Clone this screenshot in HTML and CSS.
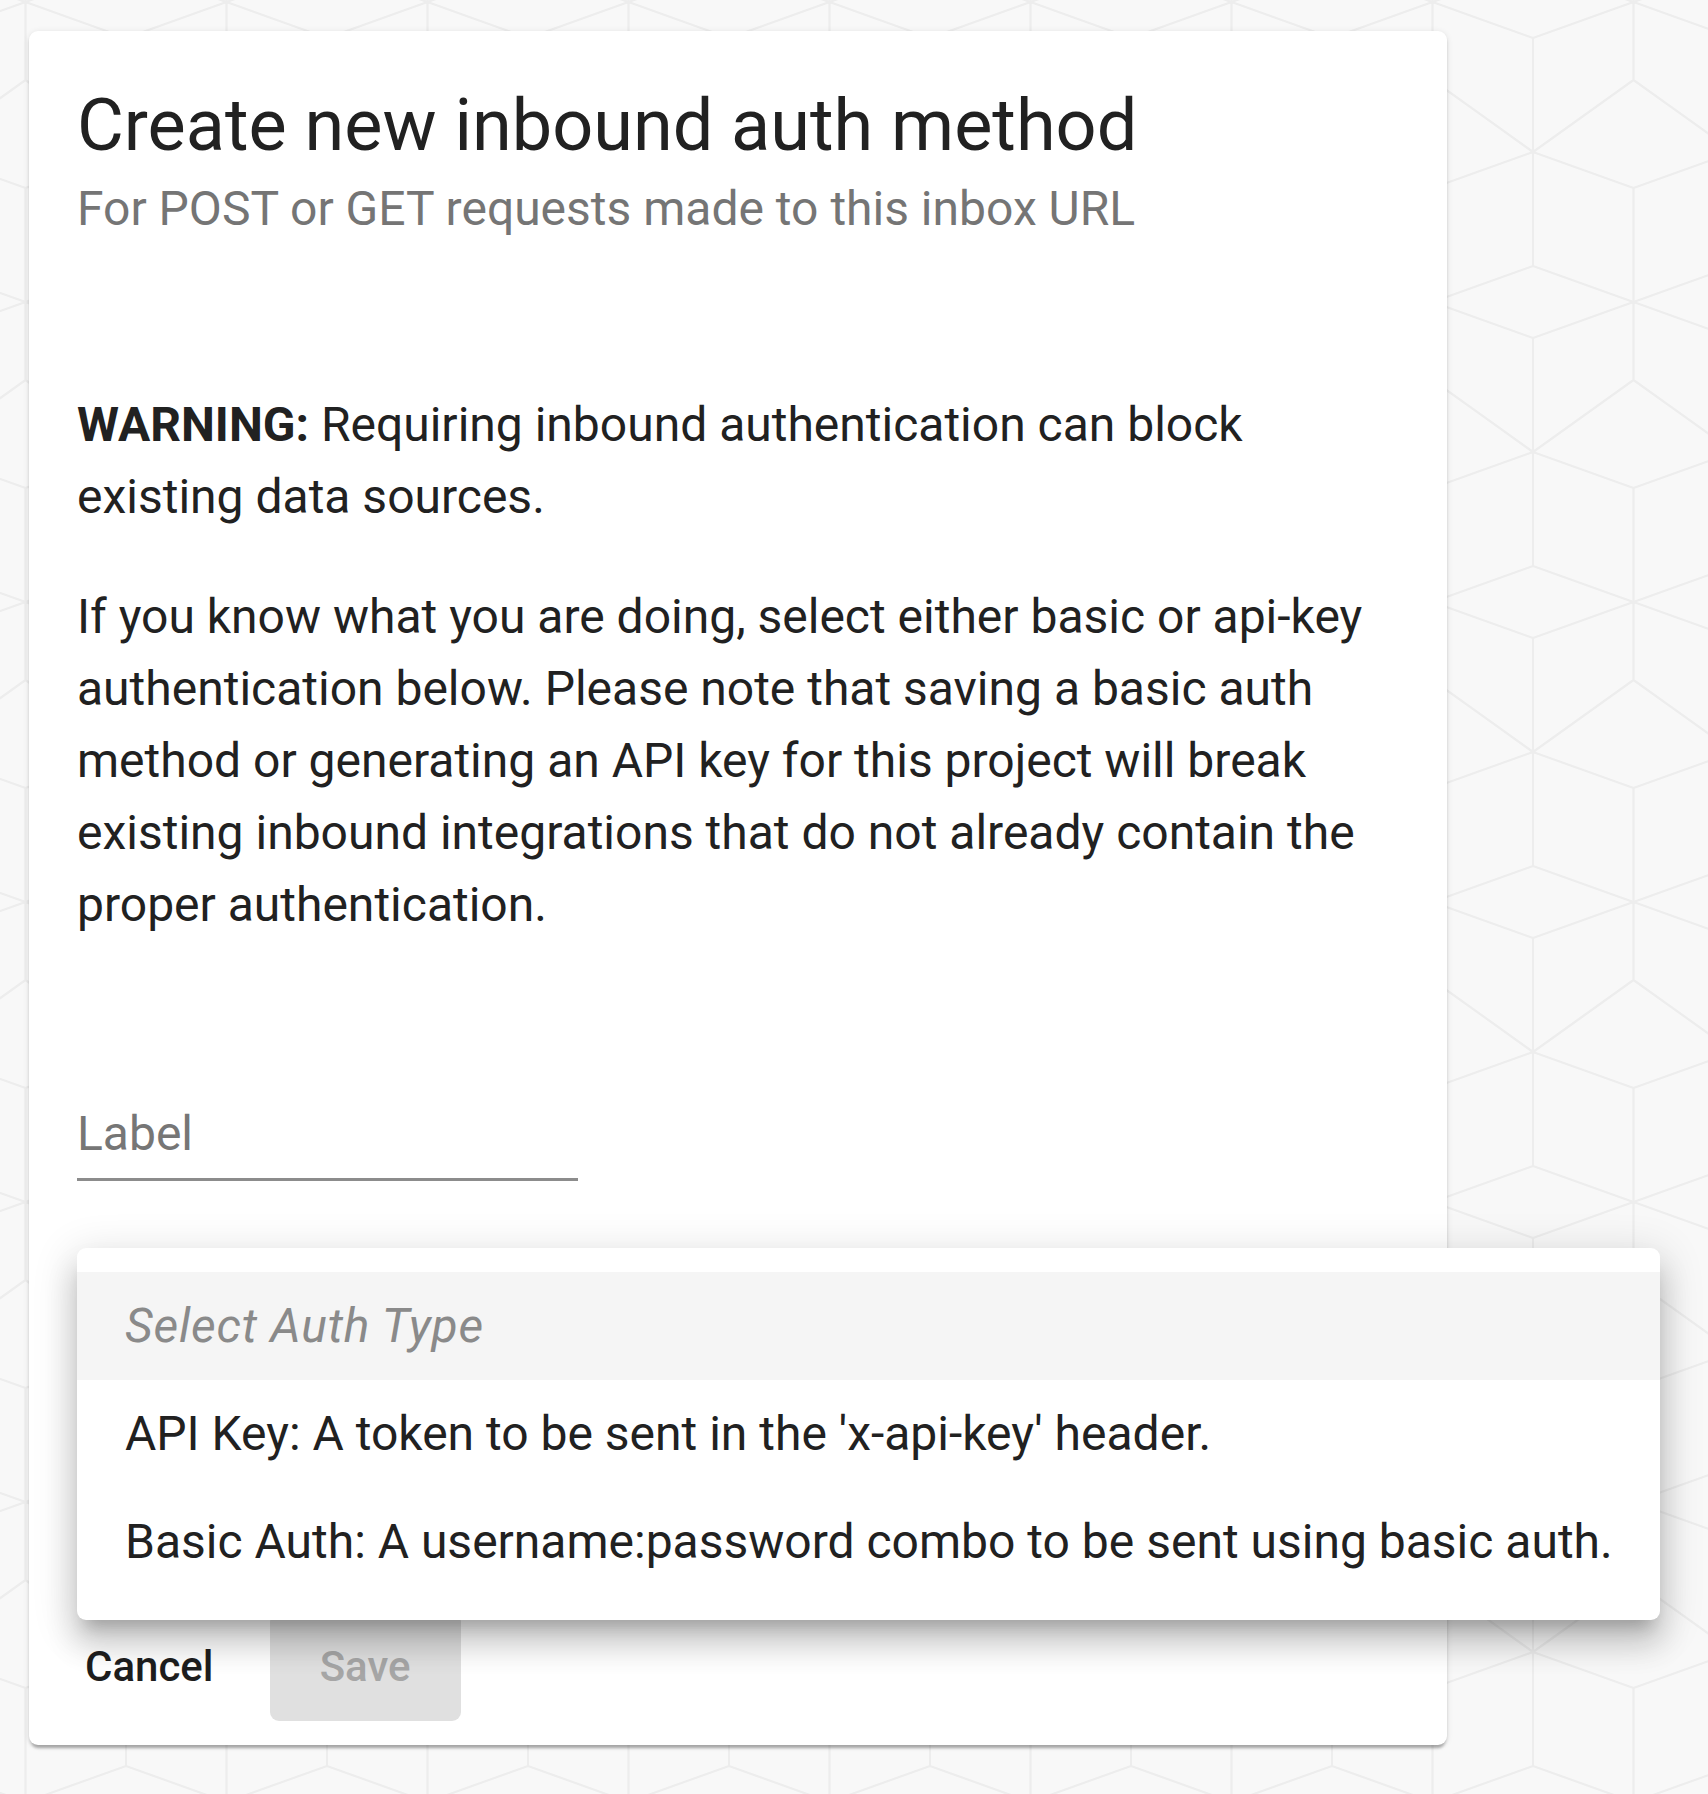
FILE: index.html
```html
<!DOCTYPE html>
<html lang="en">
<head>
<meta charset="utf-8">
<title>Create new inbound auth method</title>
<link rel="stylesheet" href="styles.css">
</head>
<body>
<div class="page">
  <div class="card">
    <h1 class="title">Create new inbound auth method</h1>
    <p class="subtitle">For POST or GET requests made to this inbox URL</p>

    <div class="content">
      <p class="para"><strong>WARNING:</strong> Requiring inbound authentication can block existing data sources.</p>
      <p class="para para-gap">If you know what you are doing, select either basic or api-key authentication below. Please note that saving a basic auth method or generating an API key for this project will break existing inbound integrations that do not already contain the proper authentication.</p>

      <div class="field">
        <span class="field-label">Label</span>
      </div>

      <div class="select-field"></div>
    </div>

    <div class="actions">
      <button class="btn btn-cancel" type="button">Cancel</button>
      <button class="btn btn-save" type="button" disabled>Save</button>
    </div>

    <ul class="menu">
      <li class="menu-item menu-placeholder">Select Auth Type</li>
      <li class="menu-item">API Key: A token to be sent in the 'x-api-key' header.</li>
      <li class="menu-item">Basic Auth: A username:password combo to be sent using basic auth.</li>
    </ul>
  </div>
</div>
</body>
</html>
```

FILE: styles.css
```css
html {
  background-color: #f8f8f8;
  background-image: url("data:image/svg+xml,%3Csvg xmlns='http://www.w3.org/2000/svg' width='201' height='300'%3E%3Cpath fill='none' stroke='%23ededed' stroke-width='2.2' d='M50 36 L150.5 0 M50 36 L-50.5 0 M251 36 L150.5 0 M50 150 L150.5 78 M50 150 L150.5 186 M50 150 L-50.5 78 M50 150 L-50.5 186 M251 150 L150.5 78 M251 150 L150.5 186 M50 264 L150.5 300 M50 264 L-50.5 300 M251 264 L150.5 300 M50 -36 L150.5 0 M251 -36 L150.5 0 M50 336 L150.5 300 M50 36 V264 M150.5 186 V300 M150.5 0 V78'/%3E%3C/svg%3E");
  background-size: 201px 300px;
  background-position: 76px 2px;
  min-height: 100%;
}

body {
  margin: 0;
  font-family: Roboto, "Noto Sans", "Liberation Sans", sans-serif;
  color: #212121;
}

.page {
  padding: 31px 0 0 29px;
  min-height: 1794px;
  box-sizing: border-box;
}

.card {
  position: relative;
  width: 1418px;
  box-sizing: border-box;
  padding: 48px 48px 24px 48px;
  background: #ffffff;
  border-radius: 9px;
  box-shadow: 0 6px 3px -3px rgba(0, 0, 0, 0.2), 0 3px 3px 0 rgba(0, 0, 0, 0.12), 0 1px 6px 0 rgba(0, 0, 0, 0.1);
}

.title {
  margin: 4px 0 0 0;
  font-size: 72px;
  line-height: 86px;
  font-weight: 400;
  color: #212121;
}

.subtitle {
  margin: 4px 0 0 0;
  font-size: 48px;
  line-height: 72px;
  color: #757575;
}

.content {
  margin-top: 144px;
}

.para {
  margin: 0;
  font-size: 48px;
  line-height: 72px;
  color: #212121;
}

.para strong {
  font-weight: 700;
}

.para-gap {
  margin-top: 48px;
}

.field {
  margin-top: 157px;
  width: 501px;
  padding-bottom: 8px;
  border-bottom: 3px solid #8c8c8c;
}

.field-label {
  display: block;
  font-size: 48px;
  line-height: 72px;
  color: #767676;
}

.select-field {
  height: 432px;
}

.actions {
  display: flex;
  align-items: center;
  height: 108px;
}

.btn {
  font-family: Roboto, "Noto Sans", "Liberation Sans", sans-serif;
  font-size: 42px;
  font-weight: 500;
  line-height: 108px;
  height: 108px;
  border: none;
  background: transparent;
  border-radius: 9px;
  cursor: pointer;
}

.btn-cancel {
  padding: 0 29px;
  margin-left: -21px;
  color: #1e1e1e;
}

.btn-save {
  margin-left: 27px;
  min-width: 191px;
  padding: 0 48px;
  background: #e0e0e0;
  color: #a6a6a6;
}

.menu {
  position: absolute;
  left: 48px;
  top: 1217px;
  width: 1583px;
  margin: 0;
  padding: 24px 0;
  list-style: none;
  background: #ffffff;
  border-radius: 9px;
  box-shadow: 0 15px 15px -9px rgba(0, 0, 0, 0.2), 0 24px 30px 3px rgba(0, 0, 0, 0.14), 0 9px 42px 6px rgba(0, 0, 0, 0.12);
}

.menu-item {
  height: 108px;
  line-height: 108px;
  padding: 0 48px;
  font-size: 48px;
  color: #212121;
  white-space: nowrap;
}

.menu-placeholder {
  background: #f5f5f5;
  color: #8a8a8a;
  font-style: italic;
  letter-spacing: 0.8px;
}
```
